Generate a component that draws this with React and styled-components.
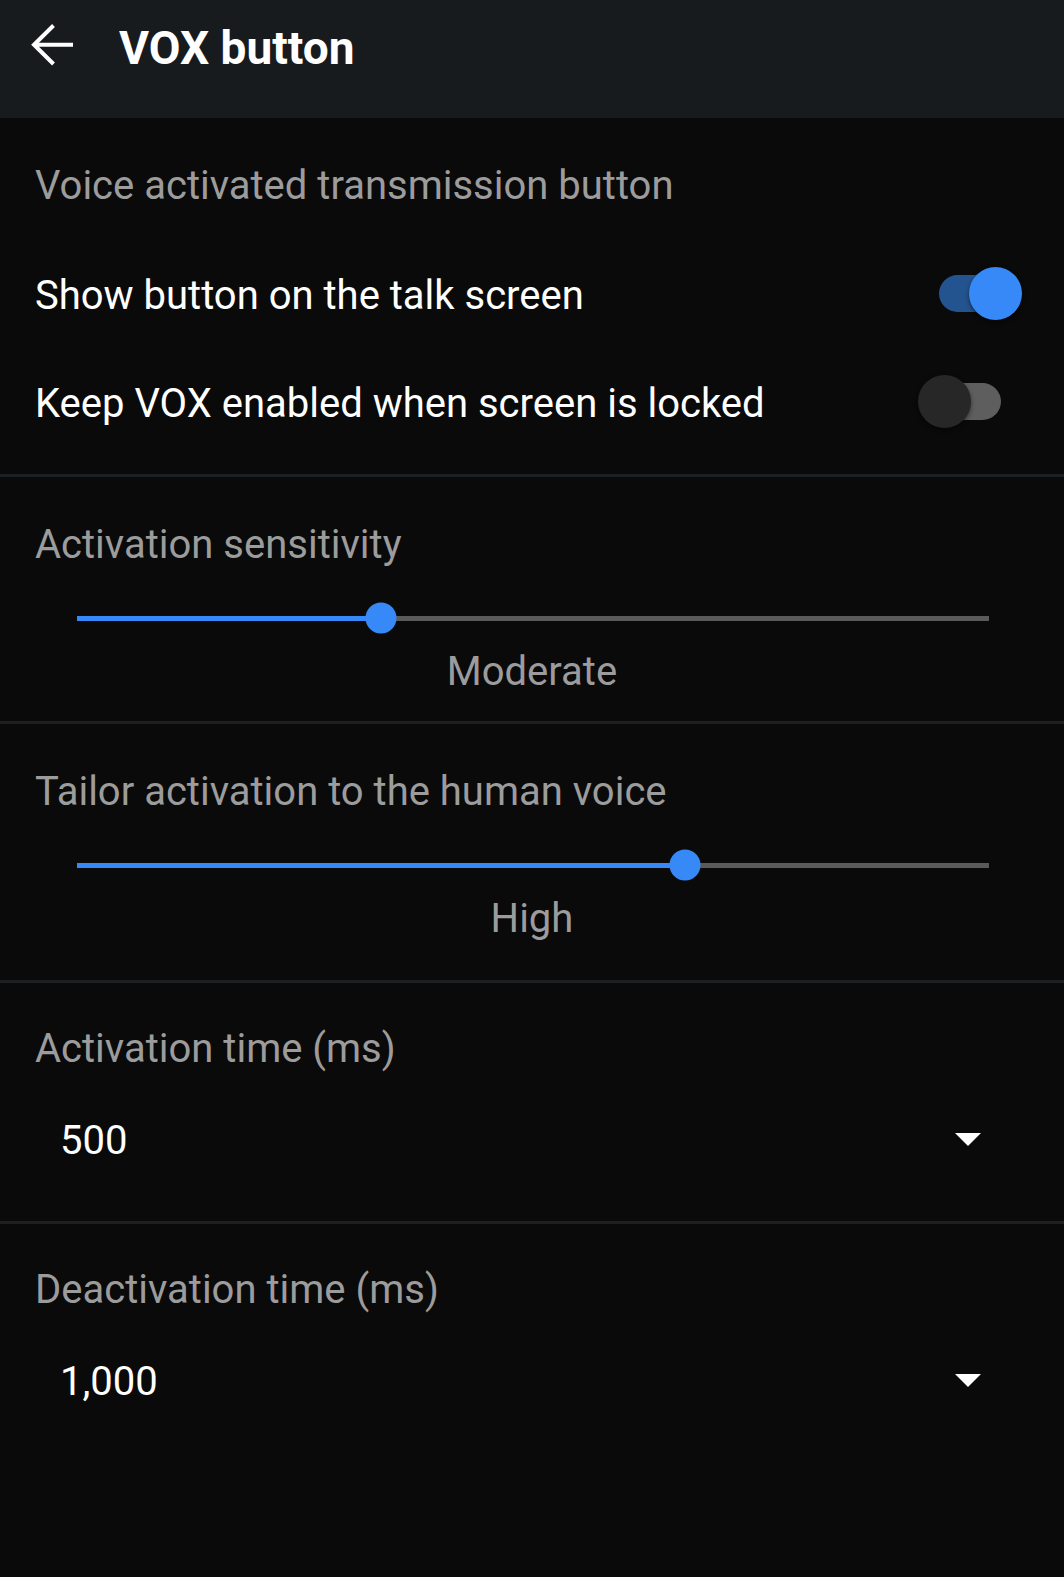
import styled, { createGlobalStyle } from "styled-components";

const GlobalStyle = createGlobalStyle`
  html, body {
    margin: 0;
    padding: 0;
    background: #0a0a0a;
  }
  body {
    font-family: Roboto, "Noto Sans", sans-serif;
    -webkit-font-smoothing: antialiased;
  }
`;

function Toggle({ checked }) {
  return (
    <ToggleBox>
      <ToggleTrack $on={checked} />
      <ToggleThumb $on={checked} />
    </ToggleBox>
  );
}

function Slider({ value, max }) {
  const pct = (value / max) * 100;
  return (
    <SliderWrap>
      <SliderTrack>
        <SliderFill style={{ width: `${pct}%` }} />
        <SliderThumb style={{ left: `${pct}%` }} />
      </SliderTrack>
    </SliderWrap>
  );
}

function Dropdown({ value }) {
  return (
    <DropRow>
      <DropValue>{value}</DropValue>
      <svg width="26" height="13" viewBox="0 0 26 13">
        <polygon points="0,0 26,0 13,13" fill="#ffffff" />
      </svg>
    </DropRow>
  );
}

function App() {
  return (
    <Page>
      <GlobalStyle />
      <Header>
        <BackIcon width="46" height="46" viewBox="0 0 46 46">
          <path
            d="M44 22.7H5 M24.5 3.5 L5 22.7 L24.5 42"
            fill="none"
            stroke="#ffffff"
            strokeWidth="4"
          />
        </BackIcon>
        <Title>VOX button</Title>
      </Header>

      <Section $pb={19}>
        <Label>Voice activated transmission button</Label>
        <SwitchList>
          <SwitchRow>
            <RowText>Show button on the talk screen</RowText>
            <Toggle checked />
          </SwitchRow>
          <SwitchRow>
            <RowText>Keep VOX enabled when screen is locked</RowText>
            <Toggle checked={false} />
          </SwitchRow>
        </SwitchList>
      </Section>

      <Section $pb={25}>
        <Label>Activation sensitivity</Label>
        <Slider value={1} max={3} />
        <SliderValue>Moderate</SliderValue>
      </Section>

      <Section $pb={37}>
        <Label>Tailor activation to the human voice</Label>
        <Slider value={2} max={3} />
        <SliderValue>High</SliderValue>
      </Section>

      <Section $pt={42} $pb={60}>
        <Label>Activation time (ms)</Label>
        <Dropdown value="500" />
      </Section>

      <Section $pt={42} $pb={160} $last>
        <Label>Deactivation time (ms)</Label>
        <Dropdown value="1,000" />
      </Section>
    </Page>
  );
}

const Page = styled.div`
  width: 1064px;
  min-height: 1577px;
  background: #0a0a0a;
  color: #ffffff;
`;

const Header = styled.header`
  display: flex;
  align-items: flex-start;
  gap: 44px;
  height: 118px;
  box-sizing: border-box;
  padding: 22px 0 0 29px;
  background: #171b1e;
`;

const BackIcon = styled.svg`
  flex-shrink: 0;
`;

const Title = styled.h1`
  margin: -1px 0 0;
  font-size: 46px;
  line-height: 54px;
  font-weight: 700;
  color: #ffffff;
`;

const Section = styled.section`
  padding: ${(p) => p.$pt ?? 44}px 0 ${(p) => p.$pb}px;
  border-bottom: ${(p) => (p.$last ? "none" : "3px solid #1c2023")};
`;

const Label = styled.div`
  padding-left: 35px;
  font-size: 40px;
  line-height: 48px;
  color: #9c9c9c;
`;

const SwitchList = styled.div`
  display: flex;
  flex-direction: column;
  margin-top: 29px;
`;

const SwitchRow = styled.div`
  display: flex;
  align-items: center;
  justify-content: space-between;
  height: 108px;
  padding: 0 42px 0 35px;
`;

const RowText = styled.span`
  margin-top: 6px;
  font-size: 40px;
  line-height: 48px;
  color: #ffffff;
`;

const ToggleBox = styled.div`
  position: relative;
  width: 104px;
  height: 53px;
  flex-shrink: 0;
`;

const ToggleTrack = styled.div`
  position: absolute;
  left: 21px;
  right: 21px;
  top: 8px;
  height: 37px;
  border-radius: 19px;
  background: ${(p) => (p.$on ? "#24548f" : "#5e5e5e")};
`;

const ToggleThumb = styled.div`
  position: absolute;
  top: 0;
  left: ${(p) => (p.$on ? "51px" : "0")};
  width: 53px;
  height: 53px;
  border-radius: 50%;
  background: ${(p) => (p.$on ? "#3689f6" : "#272727")};
  box-shadow: 0 2px 4px rgba(0, 0, 0, 0.5);
`;

const SliderWrap = styled.div`
  display: flex;
  align-items: center;
  height: 48px;
  margin-top: 25px;
  padding: 0 75px 0 77px;
`;

const SliderTrack = styled.div`
  position: relative;
  flex: 1;
  height: 5px;
  background: #5a5a5a;
`;

const SliderFill = styled.div`
  height: 100%;
  background: #3689f6;
`;

const SliderThumb = styled.div`
  position: absolute;
  top: 50%;
  width: 31px;
  height: 31px;
  border-radius: 50%;
  background: #3689f6;
  transform: translate(-50%, -50%);
`;

const SliderValue = styled.div`
  margin-top: 6px;
  text-align: center;
  font-size: 40px;
  line-height: 48px;
  color: #9c9c9c;
`;

const DropRow = styled.div`
  display: flex;
  align-items: center;
  justify-content: space-between;
  height: 48px;
  margin-top: 40px;
  padding: 0 83px 0 60px;

  svg {
    margin-top: 4px;
  }
`;

const DropValue = styled.span`
  margin-top: 8px;
  font-size: 40px;
  line-height: 48px;
  color: #ffffff;
`;

export default App;
